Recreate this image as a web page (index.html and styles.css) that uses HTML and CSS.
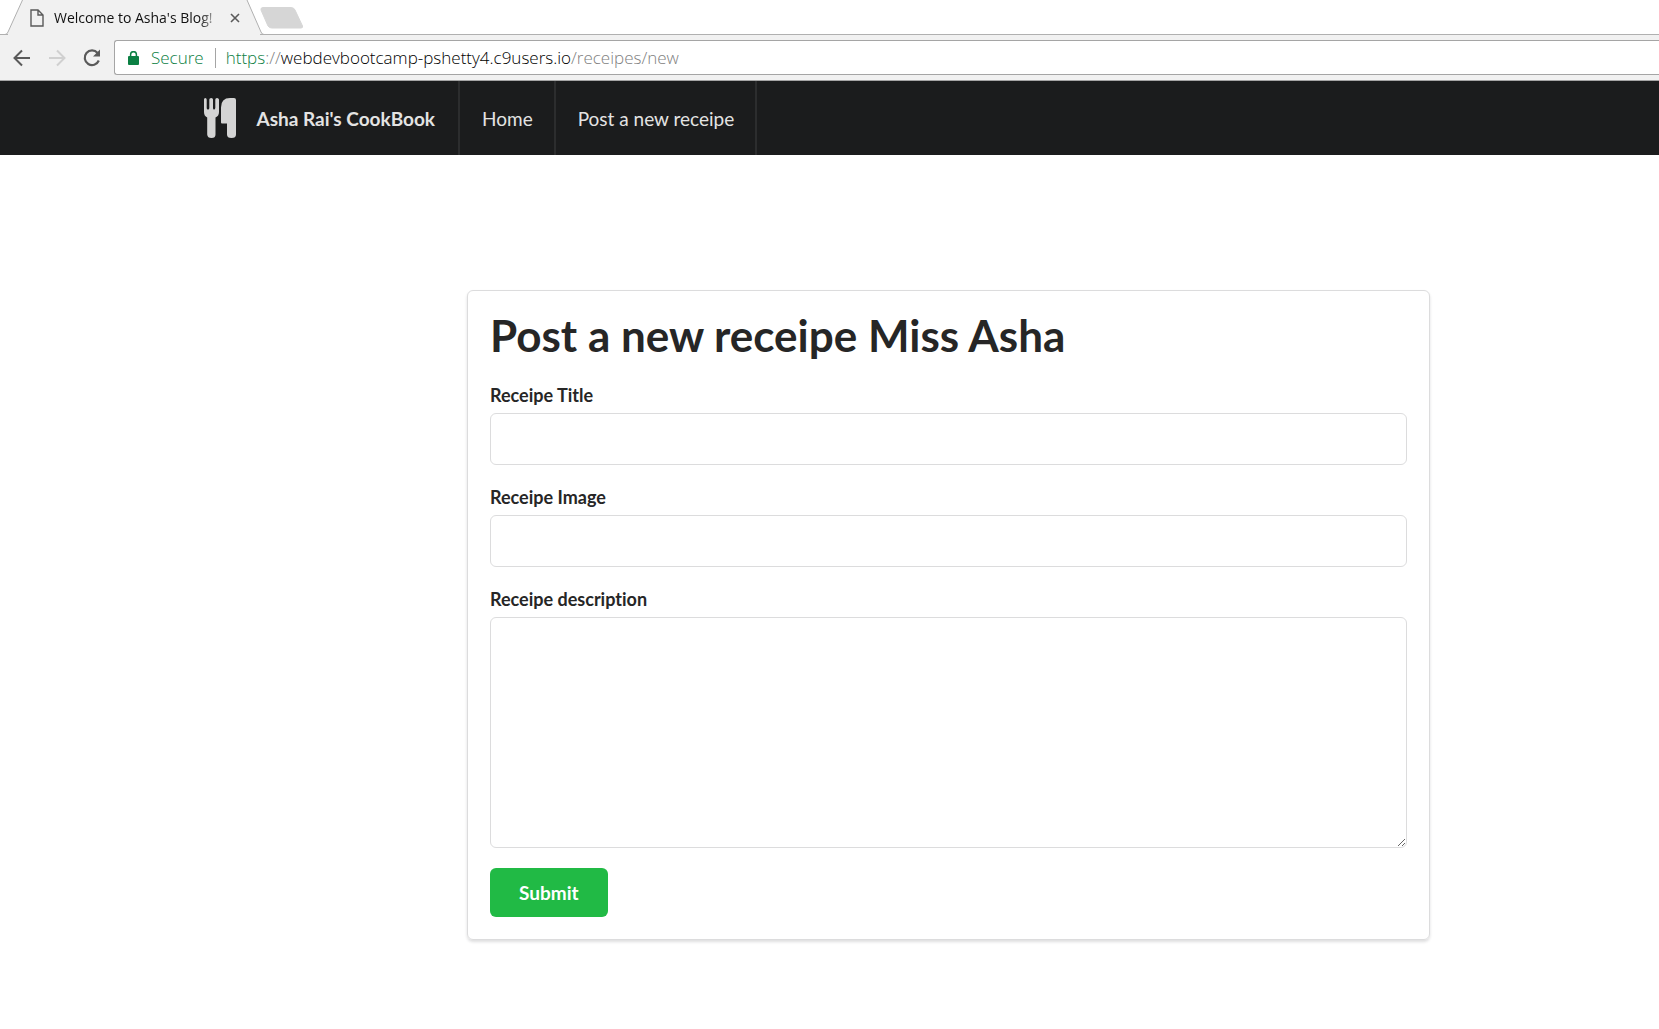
FILE: index.html
```
<!DOCTYPE html>
<html lang="en">
<head>
<meta charset="utf-8">
<title>Welcome to Asha's Blog!</title>
<link rel="stylesheet" href="styles.css">
</head>
<body>
<header class="browser">
  <div class="tab-strip">
    <div class="tab">
      <svg class="tab-shape" width="264" height="35" viewBox="0 0 264 35" aria-hidden="true">
        <path d="M0 35V34.5H5Q7 34.5 8 32L22.5 0H247L261 32Q262 34.5 264 34.5V35Z" fill="#f1f1f1"/>
        <path d="M0 34.5H5Q7 34.5 8 32L22.5 0M247 0L261 32Q262 34.5 264 34.5" fill="none" stroke="#b0b0b0"/>
      </svg>
      <svg class="page-icon" width="14" height="18" viewBox="0 0 14 18" aria-hidden="true">
        <path d="M1 1H8L13 6V17H1ZM8 1V6H13" fill="none" stroke="#5a5a5a" stroke-width="1.4"/>
      </svg>
      <span class="tab-title">Welcome to Asha's Blog!</span>
      <button class="tab-close" type="button" aria-label="Close tab">
        <svg width="10" height="10" viewBox="0 0 10 10"><path d="M1 1L9 9M9 1L1 9" stroke="#5a5a5a" stroke-width="1.6"/></svg>
      </button>
    </div>
    <button class="new-tab" type="button" aria-label="New tab">
      <svg width="44" height="22" viewBox="0 0 44 22"><path d="M3 .5H31Q34 .5 35 3L42.500 19Q43 21 41 21H12Q9 21 8 19L1 3Q.5 .5 3 .5Z" fill="#d6d6d6" stroke="#d6d6d6"/></svg>
    </button>
  </div>
  <div class="toolbar">
    <button class="tool" type="button" aria-label="Back">
      <svg width="18" height="18" viewBox="0 0 18 18"><path d="M17 9H2M9 1.500L1.500 9L9 16.500" fill="none" stroke="#5a5a5a" stroke-width="2"/></svg>
    </button>
    <button class="tool" type="button" aria-label="Forward">
      <svg width="18" height="18" viewBox="0 0 18 18"><path d="M1 9H16M9 1.500L16.500 9L9 16.500" fill="none" stroke="#d0d0d0" stroke-width="2"/></svg>
    </button>
    <button class="tool" type="button" aria-label="Reload">
      <svg width="18" height="18" viewBox="0 0 18 18"><path d="M14.600 4A7.300 7.300 0 1 0 15.800 11.500" fill="none" stroke="#5a5a5a" stroke-width="2.200"/><path d="M17 .5V7.500H10Z" fill="#5a5a5a"/></svg>
    </button>
    <div class="address">
      <svg width="11" height="14" viewBox="0 0 11 14" aria-hidden="true"><path d="M2.600 6V3.600a2.900 2.900 0 0 1 5.800 0V6" fill="none" stroke="#0b8043" stroke-width="1.500"/><rect y="5" width="11" height="9" rx="1" fill="#0b8043"/></svg>
      <span class="secure">Secure</span>
      <span class="url"><span class="scheme">https</span><span class="muted">://</span>webdevbootcamp-pshetty4.c9users.io<span class="muted">/receipes/new</span></span>
    </div>
  </div>
</header>
<nav class="menu">
  <a class="item brand" href="#">
    <svg width="32" height="40" viewBox="0 0 32 40" aria-hidden="true">
      <path fill="#d4d4d4" d="M0 1.500Q0 0 1.300 0T2.700 1.500V10Q2.700 11.500 4 11.500T5.300 10V1.500Q5.300 0 7.200 0T9 1.500V10Q9 11.500 10 11.500T11.300 10V1.500Q11.300 0 13 0T15 1.500V14Q15 18 11.500 19.500V36.500Q11.500 40 7.500 40T3.200 36.500V19.500Q0 18 0 14Z"/>
      <path fill="#d4d4d4" d="M26 0H30Q32 0 32 2V36.500Q32 40 27.500 40T23 36.500V25.500H18Q17 25.500 17 24.500V9.500Q17 0 26 0Z"/>
    </svg>
    Asha Rai's CookBook
  </a>
  <a class="item" href="#">Home</a>
  <a class="item" href="#">Post a new receipe</a>
</nav>
<main class="page">
  <form class="card">
    <h1>Post a new receipe Miss Asha</h1>
    <div class="field">
      <label for="title">Receipe Title</label>
      <input id="title" type="text">
    </div>
    <div class="field">
      <label for="image">Receipe Image</label>
      <input id="image" type="text">
    </div>
    <div class="field">
      <label for="description">Receipe description</label>
      <textarea id="description"></textarea>
    </div>
    <button class="submit" type="submit">Submit</button>
  </form>
</main>
</body>
</html>
```
FILE: styles.css
```
* { box-sizing: border-box; }
body {
  margin: 0;
  background: #fff;
  color: #262626;
  font-family: Lato, sans-serif;
  font-variant-ligatures: none;
}
button { padding: 0; border: 0; background: none; font: inherit; }
svg { display: block; flex: none; }

.browser { font-family: "Open Sans", sans-serif; }
.tab-strip {
  display: flex;
  height: 35px;
  border-bottom: 1px solid #b0b0b0;
}
.tab {
  position: relative;
  display: flex;
  align-items: center;
  width: 260px;
  height: 35px;
  padding: 0 20px 0 30px;
}
.tab-shape { position: absolute; top: 0; left: 0; z-index: -1; }
.tab::after {
  content: "";
  position: absolute;
  inset: auto 0 0 8px;
  height: 1px;
  background: #f1f1f1;
}
.tab-title {
  flex: 1;
  margin-left: 10px;
  overflow: hidden;
  color: #111;
  font-size: 14px;
  white-space: nowrap;
  mask-image: linear-gradient(to right, #000 145px, transparent 168px);
}
.new-tab { height: 36px; }
.toolbar {
  display: flex;
  align-items: center;
  height: 46px;
  padding-left: 13px;
  background: #f1f1f1;
  border-bottom: 1px solid #a5a5a5;
}
.tool { margin-right: 17px; }
.address {
  flex: 1;
  display: flex;
  align-items: center;
  height: 35px;
  margin-left: -4px;
  padding-left: 13px;
  border: 1px solid #a5a5a5;
  border-right: 0;
  border-radius: 3px 0 0 3px;
  background: #fff;
  font-size: 17px;
  font-weight: 300;
  line-height: 20px;
  white-space: nowrap;
}
.secure {
  margin-left: 12px;
  padding-right: 11px;
  border-right: 1px solid #a5a5a5;
  color: #0b8043;
}
.url { margin-left: 10px; color: #000; }
.scheme { color: #0b8043; }
.muted { color: #808080; }

.menu {
  display: flex;
  min-height: 74px;
  padding-left: 11%;
  background: #1b1c1d;
}
.item {
  display: flex;
  align-items: center;
  padding: 0 21px 0 22px;
  border-right: 2px solid #2c2d2e;
  color: #e3e3e3;
  font-size: 19px;
  text-decoration: none;
}
.brand { gap: 20px; padding-right: 23px; font-weight: 700; }

.page {
  display: grid;
  grid-template-columns: 467fr 963fr 229fr;
  padding: 135px 0 90px;
}
.card {
  grid-column: 2;
  padding: 22px;
  border: 1px solid #dcdcdd;
  border-radius: 6px;
  box-shadow: 0 2px 3px rgba(34, 36, 38, .15);
}
h1 {
  margin: 0 0 26px;
  font-size: 44px;
  line-height: 44px;
  font-weight: 700;
}
.field { margin-bottom: 20px; }
label {
  display: block;
  margin-bottom: 6px;
  font-size: 18px;
  line-height: 24px;
  font-weight: 700;
}
input, textarea {
  display: block;
  width: 100%;
  padding: 14px 20px;
  border: 1px solid #dcdcdd;
  border-radius: 6px;
  background: #fff;
  font: inherit;
  font-size: 19px;
}
input { height: 52px; }
textarea { height: 231px; resize: vertical; }
.submit {
  height: 49px;
  padding: 0 29px;
  border-radius: 6px;
  background: #21ba45;
  color: #fff;
  font-size: 19px;
  font-weight: 700;
}
```
